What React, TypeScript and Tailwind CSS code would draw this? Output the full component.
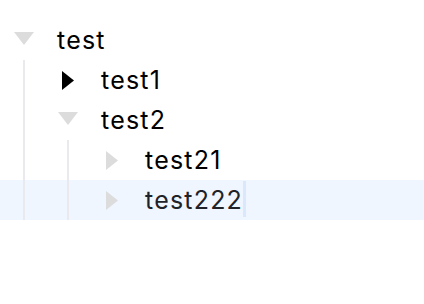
type TreeNode = {
  label: string;
  open?: boolean;
  dim?: boolean;
  editing?: boolean;
  children?: TreeNode[];
};

const tree: TreeNode[] = [
  {
    label: "test",
    open: true,
    dim: true,
    children: [
      { label: "test1", open: false },
      {
        label: "test2",
        open: true,
        dim: true,
        children: [
          { label: "test21", open: false, dim: true },
          { label: "test222", open: false, dim: true, editing: true },
        ],
      },
    ],
  },
];

type Row = { node: TreeNode; depth: number; guides: boolean[] };

const flatten = (nodes: TreeNode[], depth: number, guides: boolean[], out: Row[]) => {
  nodes.forEach((node) => {
    out.push({ node, depth, guides });
    if (node.open && node.children) {
      flatten(node.children, depth + 1, [...guides, true], out);
    }
  });
  return out;
};

const Toggle = ({ open, dim }: { open?: boolean; dim?: boolean }) => {
  const fill = dim ? "#dcdcdc" : "#000000";
  return (
    <span className="flex h-10 w-[57px] shrink-0 items-center">
      {open ? (
        <svg width="20" height="14" viewBox="0 0 20 14" className="ml-[14px] -mt-[2px]">
          <path d="M0 0 L20 0 L10 13 Z" fill={fill} />
        </svg>
      ) : (
        <svg width="13" height="19" viewBox="0 0 13 19" className="ml-[18px]">
          <path d="M0 0 L12 9.5 L0 19 Z" fill={fill} />
        </svg>
      )}
    </span>
  );
};

const TreeRow = ({ row }: { row: Row }) => {
  const { node } = row;
  return (
    <div className={"flex h-10 items-center " + (node.editing ? "bg-[#eff6ff]" : "")}>
      {row.guides.map((_, i) => (
        <span key={i} className="flex h-10 w-11 shrink-0">
          <span className="ml-[23px] h-10 w-[2px] bg-[#e9e9ee]" />
        </span>
      ))}
      <Toggle open={node.open} dim={node.dim} />
      <span
        className={
          "text-[25px] leading-none tracking-[1.2px] " +
          (node.editing ? "text-[#1f2329]" : "text-black")
        }
      >
        {node.label}
      </span>
      {node.editing && <span className="h-[36px] w-[3px] self-end mb-[3px] bg-[#dbe8fb]" />}
    </div>
  );
};

export default function App() {
  const rows = flatten(tree, 0, [], []);
  return (
    <div className="h-[304px] w-[424px] bg-white pt-5 font-['Inter',sans-serif]">
      {rows.map((row, i) => (
        <TreeRow key={i} row={row} />
      ))}
    </div>
  );
}
